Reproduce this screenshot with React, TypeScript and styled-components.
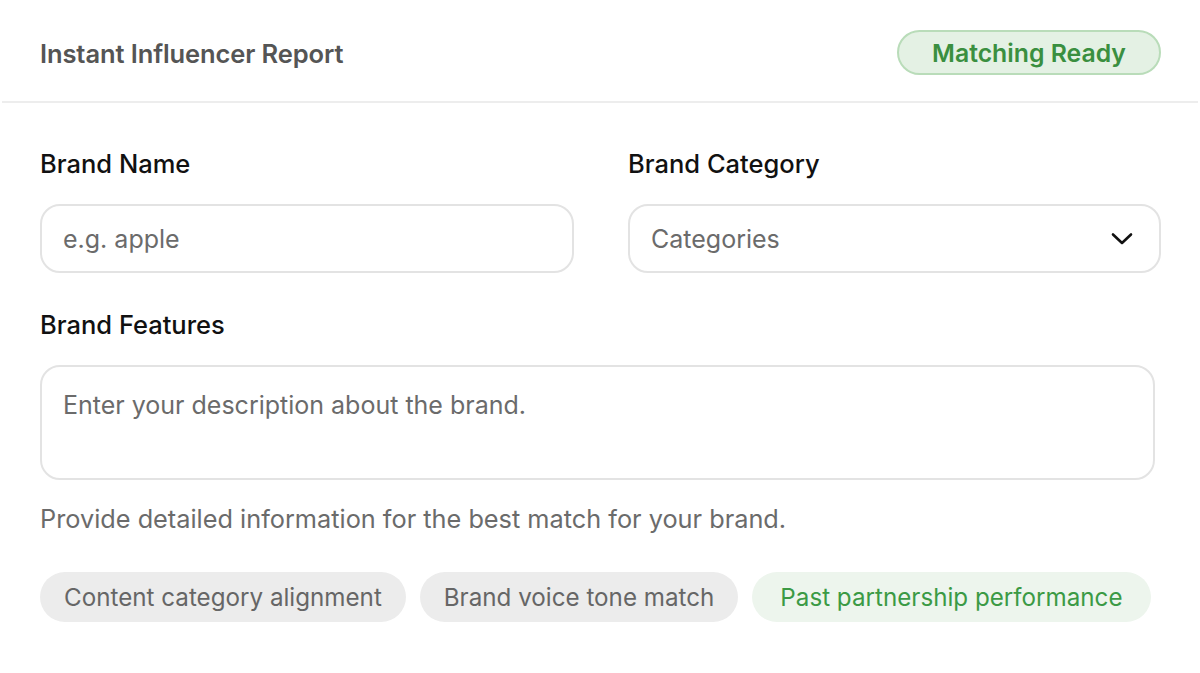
import React from "react";
import styled, { createGlobalStyle } from "styled-components";

const Global = createGlobalStyle`
  html, body { margin: 0; padding: 0; background: #ffffff; }
  body { font-family: Inter, "Noto Sans", "Liberation Sans", sans-serif; }
  * { box-sizing: border-box; }
`;

const Card = styled.div`
  width: 1200px;
  height: 673px;
  background: #fff;
  display: flex;
  flex-direction: column;
`;

const Header = styled.header`
  display: flex;
  align-items: center;
  justify-content: space-between;
  padding: 30px 37px 26px 38px;
  margin: 0 2px;
  border-bottom: 2px solid #ededed;
`;

const Title = styled.h1`
  margin: 3px 0 0;
  font-size: 25.5px;
  line-height: 30px;
  font-weight: 600;
  color: #555555;
  letter-spacing: -0.1px;
`;

const Badge = styled.span`
  display: inline-flex;
  align-items: center;
  justify-content: center;
  height: 45px;
  width: 264px;
  border-radius: 23px;
  background: #e4f1e4;
  border: 2px solid #b9dcb9;
  color: #3a8f40;
  font-size: 24.8px;
  font-weight: 600;
`;

const Body = styled.main`
  padding: 46px 39px 0 40px;
  display: flex;
  flex-direction: column;
`;

const Row = styled.div`
  display: grid;
  grid-template-columns: 534px 533px;
  column-gap: 54px;
`;

const Field = styled.div`
  display: flex;
  flex-direction: column;
  gap: 25px;
`;

const Label = styled.label`
  font-size: 25.5px;
  font-weight: 500;
  color: #111111;
  line-height: 30px;
`;

const InputBox = styled.div`
  height: 69px;
  border: 2px solid #e3e3e3;
  border-radius: 20px;
  display: flex;
  align-items: center;
  justify-content: space-between;
  padding: 0 26px 0 21px;
`;

const Placeholder = styled.span`
  font-size: 25px;
  color: #6b6b6b;
  font-weight: 400;
`;

const FeaturesField = styled(Field)`
  margin-top: 37px;
  width: 1115px;
`;

const TextArea = styled.div`
  height: 115px;
  border: 2px solid #e3e3e3;
  border-radius: 20px;
  padding: 23px 21px;
`;

const Helper = styled.p`
  margin: 24px 0 0;
  font-size: 25.3px;
  line-height: 30px;
  color: #6b6b6b;
`;

const Chips = styled.div`
  display: flex;
  gap: 14px;
  margin-top: 38px;
`;

const Chip = styled.span<{ $accent?: boolean }>`
  display: inline-flex;
  align-items: center;
  flex-shrink: 0;
  white-space: nowrap;
  height: 50px;
  padding: 0 ${(p) => (p.$accent ? "28px" : "24px")};
  border-radius: 25px;
  font-size: 24.2px;
  background: ${(p) => (p.$accent ? "#edf5ed" : "#ececec")};
  color: ${(p) => (p.$accent ? "#3b9a45" : "#666666")};
`;

const Chevron = () => (
  <svg width="22" height="14" viewBox="0 0 22 14" fill="none">
    <path d="M2 2.5 L11 11 L20 2.5" stroke="#111" strokeWidth="2.6" strokeLinecap="round" strokeLinejoin="round" />
  </svg>
);

export default function App() {
  return (
    <>
      <Global />
      <Card>
        <Header>
          <Title>Instant Influencer Report</Title>
          <Badge>Matching Ready</Badge>
        </Header>
        <Body>
          <Row>
            <Field>
              <Label>Brand Name</Label>
              <InputBox>
                <Placeholder>e.g. apple</Placeholder>
              </InputBox>
            </Field>
            <Field>
              <Label>Brand Category</Label>
              <InputBox>
                <Placeholder>Categories</Placeholder>
                <Chevron />
              </InputBox>
            </Field>
          </Row>
          <FeaturesField>
            <Label>Brand Features</Label>
            <TextArea>
              <Placeholder>Enter your description about the brand.</Placeholder>
            </TextArea>
          </FeaturesField>
          <Helper>Provide detailed information for the best match for your brand.</Helper>
          <Chips>
            <Chip>Content category alignment</Chip>
            <Chip>Brand voice tone match</Chip>
            <Chip $accent>Past partnership performance</Chip>
          </Chips>
        </Body>
      </Card>
    </>
  );
}
